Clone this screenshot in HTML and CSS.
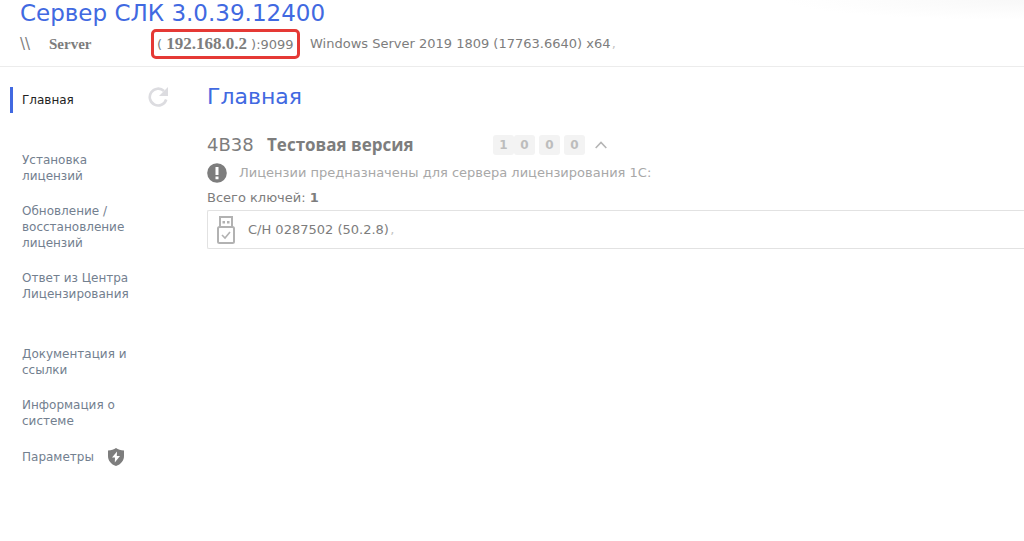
FILE: index.html
```html
<!DOCTYPE html>
<html lang="ru">
<head>
    <meta charset="UTF-8">
    <meta name="viewport" content="width=device-width, initial-scale=1.0">
    <title>Сервер СЛК</title>
    <link rel="stylesheet" href="styles.css">
</head>
<body>

    <header class="header">
        <h1>Сервер СЛК 3.0.39.12400</h1>
        <div class="server-info">
            <span class="slashes">\\</span>
            <b class="server-name">Server</b>
            <span class="address">( <b>192.168.0.2</b> ):9099</span>
            <span>Windows Server 2019 1809 (17763.6640) x64<span class="light">&#8202;,</span></span>
        </div>
    </header>

    <div class="page">
        <nav class="sidebar">
            <div class="nav-top">
                <a href="#" class="active">Главная</a>
                <button type="button" class="refresh" aria-label="Обновить">
                    <svg width="20" height="20" viewBox="0 0 20 20">
                        <path d="M18.200 12.500A8.400 8.400 0 1 1 16 4" fill="none" stroke="#dcdce0" stroke-width="2.600"/>
                        <path d="M20 0v9h-9z" fill="#dcdce0"/>
                    </svg>
                </button>
            </div>
            <div class="nav-group">
                <a href="#">Установка<br>лицензий</a>
                <a href="#">Обновление /<br>восстановление<br>лицензий</a>
                <a href="#">Ответ из Центра<br>Лицензирования</a>
            </div>
            <div class="nav-group">
                <a href="#">Документация и<br>ссылки</a>
                <a href="#">Информация о<br>системе</a>
                <a href="#" class="params">Параметры
                    <svg width="16" height="18" viewBox="0 0 16 18">
                        <path d="M8 0c2 1.600 4.700 2.500 8 2.500V8c0 4.600-3 8.400-8 10C3 16.400 0 12.600 0 8V2.500C3.300 2.500 6 1.600 8 0z" fill="#7d7d7d"/>
                        <path d="M9 3.500L4 9.600h3L6.800 14.500l5.200-6.500H8.800z" fill="#fff"/>
                    </svg>
                </a>
            </div>
        </nav>

        <main class="content">
            <h2>Главная</h2>
            <div class="license">
                <span class="code">4B38</span>
                <h3>Тестовая версия</h3>
                <div class="counts">
                    <span class="pair"><b>1</b><b>0</b></span>
                    <b>0</b>
                    <b>0</b>
                </div>
                <button type="button" class="toggle" aria-label="Свернуть">
                    <svg width="12" height="8" viewBox="0 0 12 8">
                        <path d="M.7 7L6 1.500 11.300 7" fill="none" stroke="#b5b5b5" stroke-width="1.600"/>
                    </svg>
                </button>
            </div>
            <p class="note">
                <svg width="20" height="20" viewBox="0 0 20 20">
                    <circle cx="10" cy="10" r="9.800" fill="#7d7d7d"/>
                    <path d="M8.500 4h3v8h-3zM8.500 13.500h3v2.700h-3z" fill="#fff"/>
                </svg>
                Лицензии предназначены для сервера лицензирования 1С:
            </p>
            <p class="total">Всего ключей: <b>1</b></p>
            <div class="key">
                <svg width="18" height="28" viewBox="0 0 18 28">
                    <g fill="none" stroke="#b2b2b2" stroke-width="2">
                        <path d="M3 11V1h12v10"/>
                        <rect x="1" y="11" width="16" height="16" rx="1.500"/>
                        <path d="M5 19l3 3 5-6" stroke-width="1.600"/>
                    </g>
                    <path d="M5.500 5h2.500v2.500H5.500zM10 5h2.500v2.500H10z" fill="#b2b2b2"/>
                </svg>
                <span>С/Н 0287502 (50.2.8)<span class="light">&#8202;,</span></span>
            </div>
        </main>
    </div>

</body>
</html>
```

FILE: styles.css
```css
* {
    box-sizing: border-box;
}
body {
    margin: 0;
    background: white;
    color: #7d7d7d;
    font-family: Verdana, "DejaVu Sans", sans-serif;
    font-size: 13px;
    line-height: 16px;
}
h1, h2, h3, p {
    margin: 0;
}
h1, h2 {
    color: #4169e1;
    font-size: 23px;
    font-weight: normal;
    line-height: 26px;
}
h2 {
    font-size: 22px;
}
button {
    padding: 0;
    border: none;
    background: none;
    cursor: pointer;
}
svg {
    display: block;
    flex: none;
}
.header {
    padding: 0 20px 7px;
    border-bottom: 1px solid #ececec;
    background: radial-gradient(ellipse 240px 20px at 100% 0, #f8f8f8, white);
}
.server-info {
    display: flex;
    align-items: center;
    margin-top: 3px;
    white-space: nowrap;
}
.server-info b {
    font-family: "Liberation Serif", serif;
    font-size: 15px;
}
.slashes {
    width: 29px;
    font-size: 15px;
}
.server-name {
    width: 102px;
}
.address {
    width: 149px;
    height: 30px;
    margin-right: 10px;
    padding-left: 3px;
    border: 3px solid #e53935;
    border-radius: 5px;
    line-height: 24px;
}
.address b {
    font-size: 17px;
}
.light {
    color: #c4c4c4;
}
.page {
    display: flex;
    padding-top: 17px;
}
.sidebar {
    flex: none;
    width: 207px;
    padding-left: 10px;
    font-size: 12px;
}
.sidebar a {
    color: #73808f;
    text-decoration: none;
}
.nav-top {
    display: flex;
    align-items: flex-end;
    justify-content: space-between;
    width: 158px;
}
.sidebar .active {
    margin-top: 3px;
    padding: 5px 0 5px 9px;
    border-left: 3px solid #4169e1;
    color: #222;
}
.refresh {
    margin-bottom: 6px;
}
.nav-group {
    display: flex;
    flex-direction: column;
    gap: 19px;
    padding-left: 12px;
    margin-top: 39px;
}
.nav-group + .nav-group {
    margin-top: 44px;
}
.sidebar .params {
    display: flex;
    align-items: center;
    gap: 14px;
}
.content {
    flex: 1;
    min-width: 0;
}
.license {
    display: flex;
    align-items: center;
    margin-top: 23px;
}
.code {
    width: 60px;
    font-size: 18px;
}
h3 {
    width: 226px;
    font-family: "Open Sans", sans-serif;
    font-size: 17px;
    line-height: 24px;
}
.counts {
    display: flex;
    gap: 4px;
    color: #bdbdbd;
    font-size: 12px;
}
.counts b {
    width: 21px;
    border-radius: 3px;
    background: #f3f3f3;
    line-height: 20px;
    text-align: center;
}
.pair {
    display: flex;
}
.toggle {
    margin-left: 10px;
}
.note {
    display: flex;
    align-items: center;
    gap: 12px;
    margin-top: 6px;
    color: #a8a8a8;
}
.total {
    margin: 7px 0 4px;
}
.key {
    display: flex;
    align-items: center;
    gap: 13px;
    height: 39px;
    padding-left: 9px;
    border: 1px solid #e2e2e2;
    border-right: none;
    border-radius: 2px 0 0 2px;
}
```
